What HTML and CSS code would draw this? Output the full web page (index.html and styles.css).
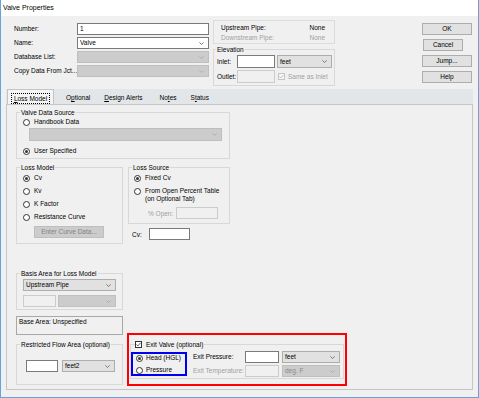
FILE: index.html
```html
<!DOCTYPE html>
<html>
<head>
<meta charset="utf-8">
<title>Valve Properties</title>
<link rel="stylesheet" href="styles.css">
</head>
<body>
<div class="window">
  <div class="titlebar">Valve Properties</div>
  <div class="content">
    <div class="top">
      <div class="form">
        <span class="lbl">Number:</span><div class="edit">1</div>
        <span class="lbl">Name:</span><div class="combo white"><span>Valve</span><svg class="chev" viewBox="0 0 5 3"><polyline points="0.4,0.4 2.5,2.5 4.6,0.4" fill="none" stroke="#606060" stroke-width="0.8"/></svg></div>
        <span class="lbl">Database List:</span><div class="combo dis"><span></span><svg class="chev" viewBox="0 0 5 3"><polyline points="0.4,0.4 2.5,2.5 4.6,0.4" fill="none" stroke="#a6a6a6" stroke-width="0.8"/></svg></div>
        <span class="lbl">Copy Data From Jct...</span><div class="combo dis"><span></span><svg class="chev" viewBox="0 0 5 3"><polyline points="0.4,0.4 2.5,2.5 4.6,0.4" fill="none" stroke="#a6a6a6" stroke-width="0.8"/></svg></div>
      </div>
      <div class="middle">
        <div class="pipes">
          <div class="prow"><span>Upstream Pipe:</span><span>None</span></div>
          <div class="prow gray"><span>Downstream Pipe:</span><span>None</span></div>
        </div>
        <fieldset class="elev">
          <legend>Elevation</legend>
          <div class="elev-in">
            <div class="erow"><span class="elbl">Inlet:</span><div class="edit e1"></div><div class="combo e2"><span>feet</span><svg class="chev" viewBox="0 0 5 3"><polyline points="0.4,0.4 2.5,2.5 4.6,0.4" fill="none" stroke="#606060" stroke-width="0.8"/></svg></div></div>
            <div class="erow r2"><span class="elbl">Outlet:</span><div class="edit dis e1"></div><span class="check dis same"><svg viewBox="0 0 5 5"><polyline points="0.4,2.4 1.9,3.9 4.6,0.9" fill="none" stroke="#b5b5b5" stroke-width="0.8"/></svg></span><span class="gray sametxt">Same as Inlet</span></div>
          </div>
        </fieldset>
      </div>
      <div class="buttons">
        <div class="btn">OK</div>
        <div class="btn narrow">Cancel</div>
        <div class="btn">Jump...</div>
        <div class="btn">Help</div>
      </div>
    </div>

    <div class="tabs">
      <div class="strip">
        <div class="tab active"><span class="focus"><u>L</u>oss Model</span></div>
        <div class="tab t-opt">O<u>p</u>tional</div>
        <div class="tab"><u>D</u>esign Alerts</div>
        <div class="tab t-notes">No<u>t</u>es</div>
        <div class="tab">S<u>t</u>atus</div>
      </div>
      <div class="panel">
        <fieldset class="vds">
          <legend>Valve Data Source</legend>
          <div class="vds-in">
            <div class="opt"><span class="radio"></span>Handbook Data</div>
            <div class="combo dis hb"><span></span><svg class="chev" viewBox="0 0 5 3"><polyline points="0.4,0.4 2.5,2.5 4.6,0.4" fill="none" stroke="#a6a6a6" stroke-width="0.8"/></svg></div>
            <div class="opt us"><span class="radio on"></span>User Specified</div>
          </div>
        </fieldset>

        <div class="row2">
          <fieldset class="lm">
            <legend>Loss Model</legend>
            <div class="lm-in">
              <div class="opt"><span class="radio on"></span>Cv</div>
              <div class="opt"><span class="radio"></span>Kv</div>
              <div class="opt"><span class="radio"></span>K Factor</div>
              <div class="opt"><span class="radio"></span>Resistance Curve</div>
              <div class="btn dis curve">Enter Curve Data...</div>
            </div>
          </fieldset>
          <div class="lscol">
            <fieldset class="ls">
              <legend>Loss Source</legend>
              <div class="ls-in">
                <div class="opt"><span class="radio on"></span>Fixed Cv</div>
                <div class="opt2"><span class="radio"></span><span class="two">From Open Percent Table<br>(on Optional Tab)</span></div>
                <div class="openrow"><span class="gray openlbl">% Open:</span><div class="edit dis openin"></div></div>
              </div>
            </fieldset>
            <div class="cvrow"><span class="cvlbl">Cv:</span><div class="edit cvin"></div></div>
          </div>
        </div>

        <div class="row3">
          <div class="leftcol">
            <fieldset class="basis">
              <legend>Basis Area for Loss Model</legend>
              <div class="basis-in">
                <div class="combo bsel"><span>Upstream Pipe</span><svg class="chev" viewBox="0 0 5 3"><polyline points="0.4,0.4 2.5,2.5 4.6,0.4" fill="none" stroke="#606060" stroke-width="0.8"/></svg></div>
                <div class="brow"><div class="edit dis bin"></div><div class="combo dis bsel2"><span></span><svg class="chev" viewBox="0 0 5 3"><polyline points="0.4,0.4 2.5,2.5 4.6,0.4" fill="none" stroke="#a6a6a6" stroke-width="0.8"/></svg></div></div>
              </div>
            </fieldset>
            <div class="basebox">Base Area: Unspecified</div>
            <fieldset class="rest">
              <legend>Restricted Flow Area (optional)</legend>
              <div class="rest-in">
                <div class="edit rin"></div>
                <div class="combo rsel"><span>feet2</span><svg class="chev" viewBox="0 0 5 3"><polyline points="0.4,0.4 2.5,2.5 4.6,0.4" fill="none" stroke="#606060" stroke-width="0.8"/></svg></div>
              </div>
            </fieldset>
          </div>
          <div class="redbox">
            <fieldset class="exit">
              <legend class="chklegend"><span class="check"><svg viewBox="0 0 5 5"><polyline points="0.4,2.4 1.9,3.9 4.6,0.9" fill="none" stroke="#333" stroke-width="0.8"/></svg></span><span>Exit Valve (optional)</span></legend>
              <div class="exit-in">
                <div class="bluebox">
                  <div class="opt"><span class="radio on"></span>Head (HGL)</div>
                  <div class="opt"><span class="radio"></span>Pressure</div>
                </div>
                <div class="exitgrid">
                  <span class="xlbl">Exit Pressure:</span>
                  <div class="edit"></div>
                  <div class="combo xsel"><span>feet</span><svg class="chev" viewBox="0 0 5 3"><polyline points="0.4,0.4 2.5,2.5 4.6,0.4" fill="none" stroke="#606060" stroke-width="0.8"/></svg></div>
                  <span class="xlbl gray">Exit Temperature:</span>
                  <div class="edit dis"></div>
                  <div class="combo dis xsel"><span>deg. F</span><svg class="chev" viewBox="0 0 5 3"><polyline points="0.4,0.4 2.5,2.5 4.6,0.4" fill="none" stroke="#a6a6a6" stroke-width="0.8"/></svg></div>
                </div>
              </div>
            </fieldset>
          </div>
        </div>
      </div>
    </div>
  </div>
</div>
</body>
</html>
```

FILE: styles.css
```css
* { box-sizing: border-box; }
html, body { margin: 0; padding: 0; }
body {
  font-family: "Liberation Sans", Arial, sans-serif;
  font-size: 6.5px;
  color: #000;
  background: #fff;
}
.window {
  width: 479px;
  height: 398px;
  border: 1px solid #66a3dd;
  border-top: 0;
  display: flex;
  flex-direction: column;
  background: #f0f0f0;
}
.titlebar {
  height: 16px;
  line-height: 16px;
  background: #fff;
  padding-left: 2px;
  font-size: 7px;
}
.content { flex: 1; }
.gray { color: #a0a0a0; }

/* top area */
.top {
  display: flex;
  align-items: flex-start;
  padding: 4px 6px 0 13px;
}
.form {
  display: grid;
  grid-template-columns: 63px 132px;
  grid-auto-rows: 12px;
  row-gap: 2px;
  margin-top: 3px;
}
.lbl { line-height: 12px; white-space: nowrap; }

.edit {
  background: #fff;
  border: 1px solid #7a7a7a;
  padding-left: 2px;
  height: 12px;
  line-height: 10px;
}
.edit.dis { background: #f0f0f0; border-color: #cccccc; }

.combo {
  display: flex;
  align-items: center;
  justify-content: space-between;
  border: 1px solid #adadad;
  background: #e1e1e1;
  padding: 0 4px 0 2px;
  height: 12px;
  line-height: 10px;
  white-space: nowrap;
}
.combo.white { background: #fff; border-color: #7a7a7a; }
.combo.dis { background: #cccccc; border-color: #bfbfbf; color: #8a8a8a; }
.chev { width: 5px; height: 3px; display: block; flex: none; }

.middle { margin-left: 4px; width: 122px; }
.pipes {
  height: 24px;
  border: 1px solid #dcdcdc;
  padding: 2px 9px 0 7px;
}
.prow {
  display: flex;
  justify-content: space-between;
  line-height: 10px;
}

fieldset {
  margin: 0;
  padding: 0;
  border: 1px solid #d8d8d8;
  min-width: 0;
}
legend {
  padding: 0 1px;
  margin-left: 3px;
  line-height: 9px;
  height: 9px;
  white-space: nowrap;
}

.elev { margin-top: 1px; }
.elev legend { margin-left: 2px; }
.elev-in { padding: 0 0 2px 3px; }
.erow {
  display: flex;
  align-items: center;
  height: 13px;
  margin-top: 1px;
}
.erow.r2 { margin-top: 2px; }
.elbl { width: 20px; }
.e1 { width: 38px; height: 13px; }
.e2 { width: 55px; height: 13px; margin-left: 2px; }
.same { margin-left: 3px; }
.sametxt { margin-left: 3px; }

.check {
  width: 7px;
  height: 7px;
  border: 1px solid #333;
  background: #fff;
  display: flex;
  flex: none;
}
.check svg { width: 5px; height: 5px; display: block; }
.check.dis { border-color: #c5c5c5; background: #f7f7f7; }

.buttons {
  margin-left: auto;
  margin-top: 3px;
  display: flex;
  flex-direction: column;
  align-items: flex-start;
  gap: 4px;
}
.btn {
  width: 50px;
  height: 12px;
  line-height: 10px;
  border: 1px solid #adadad;
  background: #e1e1e1;
  text-align: center;
  white-space: nowrap;
}
.btn.narrow { width: 40px; margin-left: 1px; }
.btn.dis { background: #cccccc; border-color: #bfbfbf; color: #838383; }

/* tabs */
.tabs { margin: 3px 5px 0 5px; }
.strip {
  display: flex;
  height: 15px;
  background: #e3e6e9;
}
.tab {
  display: flex;
  align-items: center;
  padding: 3px 7px 0 7px;
  line-height: 8px;
  white-space: nowrap;
}
.tab.active {
  margin-left: 1px;
  width: 47px;
  justify-content: center;
  background: #f4f4f4;
  border: 1px solid #c4c4c4;
  border-bottom: 0;
  padding: 2px 0 0 0;
}
.t-opt { padding-left: 12px; }
.t-notes { padding-left: 10px; }
.focus {
  outline: 1px dotted #000;
  padding: 0 2px;
  line-height: 9px;
}
.panel {
  height: 286px;
  border: 1px solid #c6c6c6;
  background: #f0f0f0;
  padding: 3px 0 0 9px;
}

/* option rows */
.opt {
  display: flex;
  align-items: center;
  gap: 4px;
  height: 8px;
  line-height: 8px;
  white-space: nowrap;
}
.radio {
  width: 7px;
  height: 7px;
  border: 1px solid #333;
  border-radius: 50%;
  background: #fff;
  display: flex;
  align-items: center;
  justify-content: center;
  flex: none;
}
.radio.on::after {
  content: "";
  width: 3px;
  height: 3px;
  border-radius: 50%;
  background: #333;
}

.vds { width: 214px; }
.vds-in { padding: 1px 0 3px 6px; }
.hb { width: 193px; height: 13px; margin: 2px 0 0 6px; }
.us { margin-top: 6px; }

.row2 {
  display: flex;
  align-items: flex-start;
  margin-top: 4px;
}
.lm { width: 107px; }
.lm-in {
  padding: 2px 0 5px 6px;
  display: flex;
  flex-direction: column;
  align-items: flex-start;
  gap: 5px;
}
.curve { width: 70px; margin-left: 11px; }

.lscol { margin-left: 5px; width: 102px; }
.ls { width: 102px; }
.ls-in { padding: 2px 0 4px 5px; }
.opt2 {
  display: flex;
  align-items: flex-start;
  gap: 4px;
  margin-top: 5px;
  line-height: 8px;
  white-space: nowrap;
}
.opt2 .radio { margin-top: 1px; }
.openrow {
  display: flex;
  align-items: center;
  margin-top: 4px;
  height: 12px;
}
.openlbl { margin-left: 14px; width: 28px; white-space: nowrap; }
.openin { width: 42px; }
.cvrow {
  display: flex;
  align-items: center;
  margin-top: 4px;
  height: 12px;
}
.cvlbl { margin-left: 4px; width: 17px; }
.cvin { width: 41px; }

.row3 {
  display: flex;
  align-items: flex-end;
  margin-top: 25px;
}
.leftcol {
  width: 107px;
  display: flex;
  flex-direction: column;
}
.basis-in { padding: 1px 0 2px 6px; }
.bsel { width: 93px; }
.brow { display: flex; margin-top: 4px; }
.bin { width: 33px; }
.bsel2 { width: 58px; margin-left: 2px; }

.basebox {
  margin-top: 6px;
  height: 19px;
  border: 1px solid #a8a8a8;
  padding: 1px 2px;
  line-height: 8px;
}
.rest { margin-top: 5px; }
.rest-in {
  display: flex;
  padding: 11px 0 12px 9px;
}
.rin { width: 32px; }
.rsel { width: 53px; margin-left: 4px; }

.redbox {
  margin-left: 4px;
  margin-bottom: -1px;
  width: 220px;
  height: 53px;
  border: 2px solid #ff0000;
  padding: 5px 0 0 1px;
}
.exit { width: 214px; }
.chklegend {
  display: flex;
  align-items: center;
  gap: 4px;
  margin-left: 4px;
  padding: 0 1px 0 0;
}
.exit-in {
  display: flex;
  align-items: flex-start;
  padding: 0 0 1px 0;
}
.bluebox {
  margin-top: 3px;
  width: 56px;
  border: 2px solid #0000f0;
  padding: 0 0 0 3px;
  display: flex;
  flex-direction: column;
  gap: 4px;
}
.bluebox .opt { gap: 3px; }
.exitgrid {
  margin-top: 2px;
  margin-left: 6px;
  display: grid;
  grid-template-columns: 52px 34px 61px;
  grid-auto-rows: 12px;
  row-gap: 2px;
}
.xlbl { line-height: 12px; white-space: nowrap; overflow: hidden; }
.xsel { margin-left: 3px; }
```
